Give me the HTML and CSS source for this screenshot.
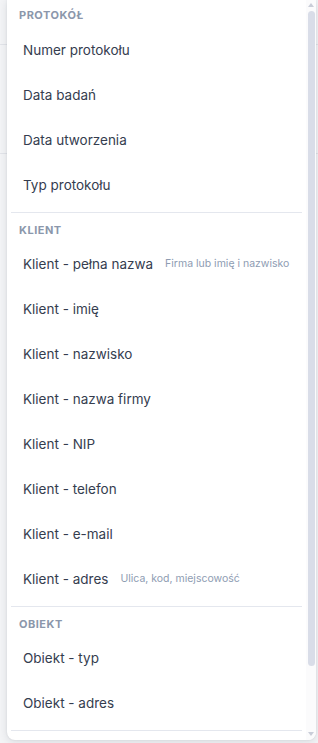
FILE: index.html
```html
<!DOCTYPE html>
<html lang="pl">
<head>
<meta charset="utf-8">
<link rel="stylesheet" href="styles.css">
</head>
<body>
<div class="panel">
  <div class="list">
    <div class="group first">
      <div class="group-title">Protokół</div>
      <div class="item"><span class="label">Numer protokołu</span></div>
      <div class="item"><span class="label">Data badań</span></div>
      <div class="item"><span class="label">Data utworzenia</span></div>
      <div class="item"><span class="label">Typ protokołu</span></div>
    </div>
    <div class="divider"></div>
    <div class="group">
      <div class="group-title">Klient</div>
      <div class="item"><span class="label">Klient - pełna nazwa</span><span class="hint">Firma lub imię i nazwisko</span></div>
      <div class="item"><span class="label">Klient - imię</span></div>
      <div class="item"><span class="label">Klient - nazwisko</span></div>
      <div class="item"><span class="label">Klient - nazwa firmy</span></div>
      <div class="item"><span class="label">Klient - NIP</span></div>
      <div class="item"><span class="label">Klient - telefon</span></div>
      <div class="item"><span class="label">Klient - e-mail</span></div>
      <div class="item"><span class="label">Klient - adres</span><span class="hint">Ulica, kod, miejscowość</span></div>
    </div>
    <div class="divider"></div>
    <div class="group">
      <div class="group-title">Obiekt</div>
      <div class="item"><span class="label">Obiekt - typ</span></div>
      <div class="item"><span class="label">Obiekt - adres</span></div>
    </div>
    <div class="divider"></div>
  </div>
  <div class="scrollbar">
    <div class="arrow up"></div>
    <div class="track"><div class="thumb"></div></div>
    <div class="arrow down"></div>
  </div>
</div>
</body>
</html>
```
FILE: styles.css
```css
html, body {
  margin: 0;
  padding: 0;
}
body {
  width: 318px;
  height: 743px;
  overflow: hidden;
  background-color: #f3f4f6;
  background-image:
    linear-gradient(#e2e4e9, #e2e4e9),
    linear-gradient(#e2e4e9, #e2e4e9);
  background-size: 100% 1px, 100% 1px;
  background-position: 0 44px, 0 153px;
  background-repeat: no-repeat;
  font-family: Inter, "Noto Sans", sans-serif;
}
.panel {
  margin-left: 7px;
  width: 309px;
  height: 740px;
  background: #ffffff;
  border-radius: 0 0 8px 8px;
  box-shadow: 0 2px 8px rgba(30, 40, 60, 0.12), 0 0 2px rgba(30, 40, 60, 0.10);
  display: flex;
  overflow: hidden;
}
.list {
  flex: 1;
  display: flex;
  flex-direction: column;
  min-width: 0;
}
.group {
  display: flex;
  flex-direction: column;
  padding-bottom: 4px;
}
.group-title {
  padding: 10px 12px 5px;
  font-size: 11px;
  line-height: 14px;
  font-weight: 700;
  letter-spacing: 0.5px;
  text-transform: uppercase;
  color: #8b97ab;
}
.group.first .group-title {
  padding-top: 8px;
  padding-bottom: 5.5px;
}
.item {
  height: 45px;
  display: flex;
  align-items: center;
  gap: 12px;
  padding: 0 16px;
  white-space: nowrap;
}
.label {
  font-size: 13.5px;
  line-height: 18px;
  color: #353d4f;
}
.hint {
  font-size: 10.5px;
  line-height: 14px;
  color: #8e9cb2;
}
.divider {
  height: 1px;
  background: #e4e7ee;
  margin: 0 4px;
}
.scrollbar {
  width: 10px;
  display: flex;
  flex-direction: column;
  align-items: center;
  background: #fbfbfc;
}
.arrow {
  width: 0;
  height: 0;
  border-left: 3.5px solid transparent;
  border-right: 3.5px solid transparent;
}
.arrow.up {
  margin-top: 3px;
  border-bottom: 4px solid #c9cdd8;
}
.arrow.down {
  margin-bottom: 4px;
  border-top: 4px solid #c9cdd8;
}
.track {
  flex: 1;
  width: 100%;
  display: flex;
  justify-content: center;
  padding-top: 4px;
}
.thumb {
  width: 7px;
  height: 655px;
  border-radius: 4px;
  background: #d9dde8;
}
```
